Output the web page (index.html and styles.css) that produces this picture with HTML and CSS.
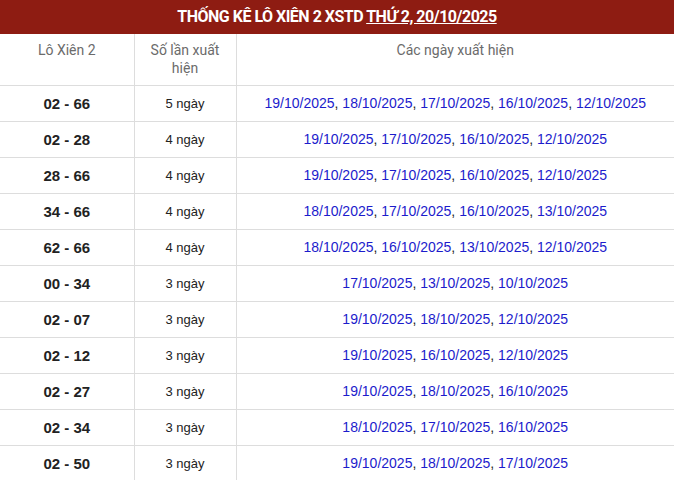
FILE: index.html
```html
<!DOCTYPE html>
<html lang="vi">
<head>
<meta charset="utf-8">
<link rel="stylesheet" href="styles.css">
</head>
<body>
<div class="box">
  <h2 class="title">THỐNG KÊ LÔ XIÊN 2 XSTD <a class="title-link" href="#">THỨ 2, 20/10/2025</a></h2>
  <table class="tbl">
    <colgroup><col class="c1"><col class="c2"><col class="c3"></colgroup>
    <thead>
      <tr><th>Lô Xiên 2</th><th>Số lần xuất<br>hiện</th><th>Các ngày xuất hiện</th></tr>
    </thead>
    <tbody>
      <tr><td class="pair">02 - 66</td><td class="cnt">5 ngày</td><td class="dates"><span>19/10/2025</span>, <span>18/10/2025</span>, <span>17/10/2025</span>, <span>16/10/2025</span>, <span>12/10/2025</span></td></tr>
      <tr><td class="pair">02 - 28</td><td class="cnt">4 ngày</td><td class="dates"><span>19/10/2025</span>, <span>17/10/2025</span>, <span>16/10/2025</span>, <span>12/10/2025</span></td></tr>
      <tr><td class="pair">28 - 66</td><td class="cnt">4 ngày</td><td class="dates"><span>19/10/2025</span>, <span>17/10/2025</span>, <span>16/10/2025</span>, <span>12/10/2025</span></td></tr>
      <tr><td class="pair">34 - 66</td><td class="cnt">4 ngày</td><td class="dates"><span>18/10/2025</span>, <span>17/10/2025</span>, <span>16/10/2025</span>, <span>13/10/2025</span></td></tr>
      <tr><td class="pair">62 - 66</td><td class="cnt">4 ngày</td><td class="dates"><span>18/10/2025</span>, <span>16/10/2025</span>, <span>13/10/2025</span>, <span>12/10/2025</span></td></tr>
      <tr><td class="pair">00 - 34</td><td class="cnt">3 ngày</td><td class="dates"><span>17/10/2025</span>, <span>13/10/2025</span>, <span>10/10/2025</span></td></tr>
      <tr><td class="pair">02 - 07</td><td class="cnt">3 ngày</td><td class="dates"><span>19/10/2025</span>, <span>18/10/2025</span>, <span>12/10/2025</span></td></tr>
      <tr><td class="pair">02 - 12</td><td class="cnt">3 ngày</td><td class="dates"><span>19/10/2025</span>, <span>16/10/2025</span>, <span>12/10/2025</span></td></tr>
      <tr><td class="pair">02 - 27</td><td class="cnt">3 ngày</td><td class="dates"><span>19/10/2025</span>, <span>18/10/2025</span>, <span>16/10/2025</span></td></tr>
      <tr><td class="pair">02 - 34</td><td class="cnt">3 ngày</td><td class="dates"><span>18/10/2025</span>, <span>17/10/2025</span>, <span>16/10/2025</span></td></tr>
      <tr><td class="pair">02 - 50</td><td class="cnt">3 ngày</td><td class="dates"><span>19/10/2025</span>, <span>18/10/2025</span>, <span>17/10/2025</span></td></tr>
    </tbody>
  </table>
</div>
</body>
</html>
```

FILE: styles.css
```css
html, body {
  margin: 0;
  padding: 0;
  background: #fff;
}
.box {
  width: 674px;
}
.title {
  margin: 0;
  height: 34px;
  background: #8e1c12;
  color: #fff;
  font-family: Roboto, "Liberation Sans", sans-serif;
  font-weight: 700;
  font-size: 16px;
  letter-spacing: -0.5px;
  line-height: 34px;
  text-align: center;
}
.title-link {
  color: #fff;
  text-decoration: underline;
}
.tbl {
  width: 100%;
  border-collapse: collapse;
  table-layout: fixed;
}
.c1 { width: 134px; }
.c2 { width: 102px; }
.tbl th {
  font-family: Roboto, "Liberation Sans", sans-serif;
  font-weight: 400;
  font-size: 14px;
  color: #6b6b6b;
  line-height: 18px;
  height: 51px;
  padding: 7px 4px 0;
  box-sizing: border-box;
  vertical-align: top;
  text-align: center;
  border-bottom: 1px solid #ddd;
  border-left: 1px solid #ddd;
}
.tbl td {
  height: 36px;
  padding: 0 4px;
  box-sizing: border-box;
  text-align: center;
  vertical-align: middle;
  border-bottom: 1px solid #ddd;
  border-left: 1px solid #ddd;
  color: #222;
}
.tbl th:first-child, .tbl td:first-child {
  border-left: none;
}
.pair {
  font-family: "Liberation Sans", Arial, sans-serif;
  font-weight: 700;
  font-size: 15px;
}
.cnt {
  font-family: "Liberation Sans", Arial, sans-serif;
  font-size: 13px;
}
.dates {
  font-family: "Liberation Sans", Arial, sans-serif;
  font-size: 14px;
  color: #222;
}
.dates span {
  color: #1c1ccc;
}
```
